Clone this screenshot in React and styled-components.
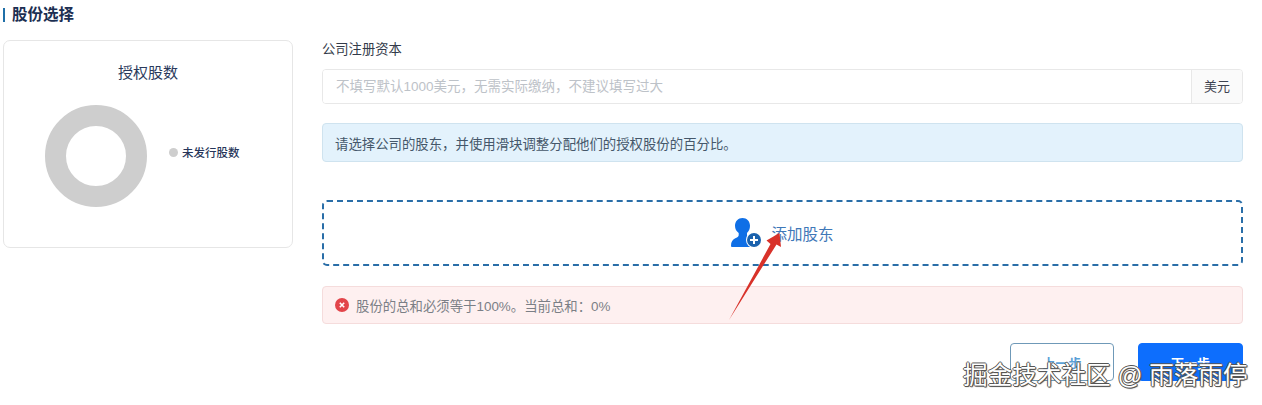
import styled, { createGlobalStyle } from 'styled-components';

const Global = createGlobalStyle`
  html, body {
    margin: 0;
    padding: 0;
    background: #fff;
    font-family: "Liberation Sans", "Noto Sans CJK SC", sans-serif;
  }
`;

const Page = styled.div`
  position: relative;
  width: 1262px;
  height: 405px;
  overflow: hidden;
  background: #fff;
`;

const Heading = styled.h2`
  margin: 0;
  height: 30px;
  padding: 6px 0 0 3px;
  box-sizing: border-box;
  display: flex;
  align-items: flex-start;
  font-size: 15.5px;
  line-height: 18px;
  font-weight: 700;
  color: #1c2f52;

  &::before {
    content: '';
    width: 2px;
    height: 14px;
    margin: 2px 7px 0 0;
    background: #1f6fa8;
  }
`;

const Columns = styled.div`
  display: flex;
  gap: 29px;
  padding: 10px 19px 0 3px;
`;

const ChartCard = styled.section`
  box-sizing: border-box;
  flex: 0 0 290px;
  height: 208px;
  padding-top: 21px;
  border: 1px solid #e6e6e6;
  border-radius: 7px;
`;

const ChartTitle = styled.div`
  text-align: center;
  font-size: 15px;
  line-height: 22px;
  color: #2a3a5c;
`;

const ChartBody = styled.div`
  display: flex;
  align-items: center;
  margin: 21px 0 0 41px;
`;

const Donut = styled.div`
  box-sizing: border-box;
  width: 102px;
  height: 102px;
  border: 21px solid #cecece;
  border-radius: 50%;
`;

const Legend = styled.div`
  display: flex;
  align-items: center;
  gap: 4px;
  margin: -8px 0 0 22px;
  font-size: 11.5px;
  font-weight: 500;
  color: #27365a;
`;

const LegendDot = styled.span`
  width: 9px;
  height: 9px;
  border-radius: 50%;
  background: #cecece;
`;

const Form = styled.div`
  flex: 1;
  display: flex;
  flex-direction: column;
`;

const Label = styled.label`
  height: 29px;
  font-size: 13.3px;
  line-height: 20px;
  color: #333b4a;
`;

const InputGroup = styled.div`
  box-sizing: border-box;
  display: flex;
  height: 35px;
  border: 1px solid #e8e8e8;
  border-radius: 4px;
  overflow: hidden;
`;

const Input = styled.input`
  flex: 1;
  min-width: 0;
  padding: 0 13px;
  border: 0;
  outline: 0;
  font: inherit;
  font-size: 13.5px;
  color: #333;

  &::placeholder {
    color: #bdc2c8;
    opacity: 1;
  }
`;

const Unit = styled.span`
  flex: 0 0 50px;
  border-left: 1px solid #e8e8e8;
  background: #fafafa;
  text-align: center;
  font-size: 13px;
  line-height: 33px;
  color: #3c4250;
`;

const Alert = styled.div`
  box-sizing: border-box;
  display: flex;
  align-items: center;
  height: ${p => p.$height}px;
  margin-top: ${p => p.$top}px;
  padding: 0 12px;
  border: 1px solid ${p => p.$border};
  border-radius: 4px;
  background: ${p => p.$bg};
  font-size: 13.4px;
  color: ${p => p.$color};
`;

const AlertIcon = styled.svg`
  width: 14px;
  height: 14px;
  margin-right: 7px;
`;

const AddShareholder = styled.button`
  box-sizing: border-box;
  display: flex;
  align-items: center;
  justify-content: center;
  gap: 10px;
  height: 66px;
  margin-top: 38px;
  padding: 0;
  border: 2px dashed #2a6ea8;
  border-radius: 5px;
  background: #fff;
  font: inherit;
  font-size: 15.5px;
  color: #3f78b8;
`;

const Actions = styled.div`
  display: flex;
  justify-content: flex-end;
  gap: 24px;
  margin-top: 19px;
`;

const StepButton = styled.button`
  box-sizing: border-box;
  width: ${p => p.$width}px;
  height: 38px;
  border: 1px solid ${p => (p.$primary ? '#0d6efd' : '#6f99b8')};
  border-radius: 4px;
  background: ${p => (p.$primary ? '#0d6efd' : '#fff')};
  font: inherit;
  font-size: 13px;
  font-weight: 700;
  color: ${p => (p.$primary ? '#fff' : '#5a9fd6')};
`;

const Watermark = styled.div`
  position: absolute;
  left: 963px;
  top: 362px;
  font-size: 24.6px;
  line-height: 28px;
  white-space: nowrap;
  color: #fff;
  text-shadow: 1px 0 #555, -1px 0 #555, 0 1px #555, 0 -1px #555, 1px 1px 1px #444;
`;

const ArrowMark = styled.svg`
  position: absolute;
  left: 725px;
  top: 230px;
  width: 60px;
  height: 95px;
`;

const UserPlusIcon = () => (
  <svg width="30" height="32" viewBox="0 0 30 32" fill="none">
    <path
      d="M11.500 1c4.300 0 7.500 3.200 7.500 7.800 0 3-1.200 5.600-3 7.200v2c0 1.100.9 1.700 2.400 2.400 1.500.7 2.600 1.300 3.400 2.100V30H1.300C.5 30 0 29.500 0 28.700c0-3.900 1.500-6.200 4.800-7.700 1.800-.8 2.900-1.500 2.900-3v-2C5.400 14.400 4 11.800 4 8.800 4 4.200 7.200 1 11.500 1z"
      fill="#0f6fe6"
    />
    <circle cx="23" cy="23" r="8" fill="#fff" />
    <circle cx="23" cy="23" r="7" fill="#1b62ad" />
    <path d="M23 19v8M19 23h8" stroke="#fff" strokeWidth="2" />
  </svg>
);

const App = () => (
  <Page>
    <Global />
    <Heading>股份选择</Heading>
    <Columns>
      <ChartCard>
        <ChartTitle>授权股数</ChartTitle>
        <ChartBody>
          <Donut />
          <Legend>
            <LegendDot />
            未发行股数
          </Legend>
        </ChartBody>
      </ChartCard>
      <Form>
        <Label>公司注册资本</Label>
        <InputGroup>
          <Input placeholder="不填写默认1000美元，无需实际缴纳，不建议填写过大" />
          <Unit>美元</Unit>
        </InputGroup>
        <Alert $height={39} $top={19} $bg="#e3f2fc" $border="#cfe3ef" $color="#45576a">
          请选择公司的股东，并使用滑块调整分配他们的授权股份的百分比。
        </Alert>
        <AddShareholder>
          <UserPlusIcon />
          添加股东
        </AddShareholder>
        <Alert $height={38} $top={20} $bg="#fef0f0" $border="#f5dcdc" $color="#7b7f86">
          <AlertIcon viewBox="0 0 14 14">
            <circle cx="7" cy="7" r="7" fill="#e2454a" />
            <path d="M4.800 4.800l4.400 4.400M9.200 4.800l-4.400 4.400" stroke="#fff" strokeWidth="1.600" />
          </AlertIcon>
          股份的总和必须等于100%。当前总和：0%
        </Alert>
        <Actions>
          <StepButton $width={104}>上一步</StepButton>
          <StepButton $width={105} $primary>下一步</StepButton>
        </Actions>
      </Form>
    </Columns>
    <ArrowMark viewBox="0 0 60 95">
      <path d="M4 90L45.500 14 41.500 10.500 54.500 3 56 17 51.500 14.500z" fill="#d8322a" />
    </ArrowMark>
    <Watermark>掘金技术社区 @ 雨落雨停</Watermark>
  </Page>
);

export default App;
